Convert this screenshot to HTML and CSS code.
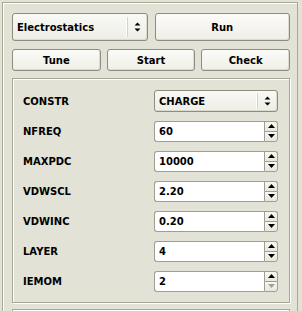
FILE: index.html
```
<html>
    <head>
        <title>Electrostatics</title>
        <link rel="stylesheet" href="styles.css">
    </head>
    <body>
        <div class="window">
            <div class="toolbar">
                <div class="combo combo-large">
                    <span class="combo-text">Electrostatics</span>
                    <span class="combo-arrow">
                        <svg width="7" height="10" viewBox="0 0 7 10"><path d="M3.5 0.5 L6.5 3.5 L0.5 3.5 Z M0.5 6.5 L6.5 6.5 L3.5 9.5 Z" fill="#000"/></svg>
                    </span>
                </div>
                <button class="btn btn-large">Run</button>
            </div>
            <div class="actions">
                <button class="btn">Tune</button>
                <button class="btn">Start</button>
                <button class="btn">Check</button>
            </div>
            <div class="group">
                <span class="label">CONSTR</span>
                <div class="combo">
                    <span class="combo-text">CHARGE</span>
                    <span class="combo-arrow">
                        <svg width="7" height="10" viewBox="0 0 7 10"><path d="M3.5 0.5 L6.5 3.5 L0.5 3.5 Z M0.5 6.5 L6.5 6.5 L3.5 9.5 Z" fill="#000"/></svg>
                    </span>
                </div>

                <span class="label">NFREQ</span>
                <div class="spin">
                    <span class="spin-value">60</span>
                    <span class="spin-buttons">
                        <span class="spin-up"><svg width="7" height="4" viewBox="0 0 7 4"><path d="M3.5 0 L7 4 L0 4 Z"/></svg></span>
                        <span class="spin-down"><svg width="7" height="4" viewBox="0 0 7 4"><path d="M0 0 L7 0 L3.5 4 Z"/></svg></span>
                    </span>
                </div>

                <span class="label">MAXPDC</span>
                <div class="spin">
                    <span class="spin-value">10000</span>
                    <span class="spin-buttons">
                        <span class="spin-up"><svg width="7" height="4" viewBox="0 0 7 4"><path d="M3.5 0 L7 4 L0 4 Z"/></svg></span>
                        <span class="spin-down"><svg width="7" height="4" viewBox="0 0 7 4"><path d="M0 0 L7 0 L3.5 4 Z"/></svg></span>
                    </span>
                </div>

                <span class="label">VDWSCL</span>
                <div class="spin">
                    <span class="spin-value">2.20</span>
                    <span class="spin-buttons">
                        <span class="spin-up"><svg width="7" height="4" viewBox="0 0 7 4"><path d="M3.5 0 L7 4 L0 4 Z"/></svg></span>
                        <span class="spin-down"><svg width="7" height="4" viewBox="0 0 7 4"><path d="M0 0 L7 0 L3.5 4 Z"/></svg></span>
                    </span>
                </div>

                <span class="label">VDWINC</span>
                <div class="spin">
                    <span class="spin-value">0.20</span>
                    <span class="spin-buttons">
                        <span class="spin-up"><svg width="7" height="4" viewBox="0 0 7 4"><path d="M3.5 0 L7 4 L0 4 Z"/></svg></span>
                        <span class="spin-down"><svg width="7" height="4" viewBox="0 0 7 4"><path d="M0 0 L7 0 L3.5 4 Z"/></svg></span>
                    </span>
                </div>

                <span class="label">LAYER</span>
                <div class="spin">
                    <span class="spin-value">4</span>
                    <span class="spin-buttons">
                        <span class="spin-up"><svg width="7" height="4" viewBox="0 0 7 4"><path d="M3.5 0 L7 4 L0 4 Z"/></svg></span>
                        <span class="spin-down"><svg width="7" height="4" viewBox="0 0 7 4"><path d="M0 0 L7 0 L3.5 4 Z"/></svg></span>
                    </span>
                </div>

                <span class="label">IEMOM</span>
                <div class="spin">
                    <span class="spin-value">2</span>
                    <span class="spin-buttons">
                        <span class="spin-up"><svg width="7" height="4" viewBox="0 0 7 4"><path d="M3.5 0 L7 4 L0 4 Z"/></svg></span>
                        <span class="spin-down disabled"><svg width="7" height="4" viewBox="0 0 7 4"><path d="M0 0 L7 0 L3.5 4 Z"/></svg></span>
                    </span>
                </div>
            </div>
            <div class="group-next"></div>
        </div>
    </body>
</html>
```

FILE: styles.css
```
html, body {
    margin: 0;
    height: 311px;
    overflow: hidden;
}

body {
    background-color: #e3e2d6;
    font-family: "DejaVu Sans", Verdana, sans-serif;
    font-size: 10px;
    font-weight: bold;
    color: #000000;
}

.window {
    margin: 2px 0 0 2px;
    width: 296px;
    height: 309px;
    overflow: hidden;
    box-sizing: border-box;
    border: 1px solid #a9a795;
    border-bottom: none;
    box-shadow: inset 1px 1px 0 #ffffff;
    padding: 10px 7px 0 9px;
}

.toolbar {
    display: grid;
    grid-template-columns: 1fr 1fr;
    column-gap: 7px;
    height: 28px;
}

.actions {
    display: grid;
    grid-template-columns: 1fr 1fr 1fr;
    column-gap: 6px;
    height: 22px;
    margin-top: 8px;
}

.btn {
    font: inherit;
    color: #000000;
    margin: 0;
    padding: 0;
    border: 1px solid #8e8c7c;
    border-radius: 3px;
    background: linear-gradient(#fbfbf8, #efeee7);
    box-shadow: inset -1px -1px 0 #dcdbd0;
}

.combo {
    display: flex;
    align-items: center;
    box-sizing: border-box;
    height: 22px;
    border: 1px solid #8e8c7c;
    border-radius: 3px;
    background: linear-gradient(#f9f9f5, #eeede6);
    box-shadow: inset -1px -1px 0 #dcdbd0;
}

.combo-large {
    height: 28px;
}

.combo-text {
    flex: 1;
    padding-left: 4px;
}

.combo-arrow {
    display: flex;
    align-items: center;
    justify-content: center;
    width: 19px;
    height: 16px;
    border-left: 1px solid #d4d3c6;
    box-shadow: -1px 0 0 #ffffff;
}

.combo-large .combo-arrow {
    height: 20px;
}

.group {
    display: grid;
    grid-template-columns: 131px 1fr;
    grid-auto-rows: 30px;
    align-items: center;
    margin-top: 7px;
    height: 225px;
    box-sizing: border-box;
    border: 1px solid #a9a795;
    box-shadow: inset 1px 1px 0 #ffffff, 1px 1px 0 #ffffff;
    padding: 7px 11px 6px 10px;
}

.group-next {
    margin-top: 6px;
    height: 20px;
    border: 1px solid #a9a795;
    border-bottom: none;
    box-shadow: inset 1px 1px 0 #ffffff;
}

.label {
    padding-top: 1px;
}

.spin {
    display: flex;
    height: 21px;
}

.spin-value {
    flex: 1;
    display: flex;
    align-items: center;
    padding-left: 4px;
    background-color: #ffffff;
    border: 1px solid #a09e8e;
    border-right: none;
    border-radius: 3px 0 0 3px;
}

.spin-buttons {
    display: flex;
    flex-direction: column;
    width: 14px;
}

.spin-up, .spin-down {
    flex: 1;
    display: flex;
    align-items: center;
    justify-content: center;
    background: linear-gradient(#f7f6f1, #e8e7de);
    border: 1px solid #a09e8e;
}

.spin-up {
    border-radius: 0 3px 0 0;
    border-bottom: none;
}

.spin-down {
    border-radius: 0 0 3px 0;
}

.spin-down.disabled svg {
    fill: #a3a191;
}
```
